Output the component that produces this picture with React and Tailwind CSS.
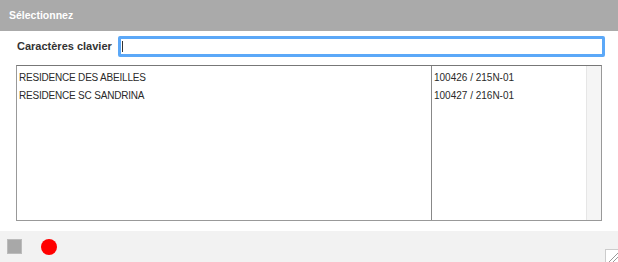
import React from 'react';

const rows = [
  { name: 'RESIDENCE DES ABEILLES', ref: '100426 / 215N-01' },
  { name: 'RESIDENCE SC SANDRINA', ref: '100427 / 216N-01' },
];

const App = () => {
  return (
    <div className="w-[618px] h-[262px] flex flex-col bg-white text-[#2a2a2a] font-['Liberation_Sans',Arial,sans-serif] overflow-hidden">
      <div className="h-[31px] flex-shrink-0 bg-[#aaaaaa] flex items-center pl-[9px]">
        <span className="text-white font-bold text-[10.5px]">Sélectionnez</span>
      </div>

      <div className="flex items-center pl-[17px] pr-[13px] mt-[5px] h-[21px]">
        <span className="font-bold text-[11px] text-[#333] w-[101px] flex-shrink-0 whitespace-nowrap">Caractères clavier</span>
        <div className="flex-1 h-[21px] border-[3px] border-[#5ba8f8] rounded-[2px] bg-white flex items-center pl-[1px]">
          <div className="w-px h-[11px] bg-[#333]" />
        </div>
      </div>

      <div className="mx-[16px] mt-[8px] h-[156px] border border-[#999] border-t-[#777] flex">
        <div className="w-[415px] border-r border-[#888] pt-[2px]">
          {rows.map((r) => (
            <div key={r.name} className="h-[18px] flex items-center pl-[2px] text-[10px] tracking-[-0.2px] whitespace-nowrap">{r.name}</div>
          ))}
        </div>
        <div className="flex-1 pt-[2px]">
          {rows.map((r) => (
            <div key={r.ref} className="h-[18px] flex items-center pl-[2px] text-[10px] whitespace-nowrap">{r.ref}</div>
          ))}
        </div>
        <div className="w-[15px] bg-[#f5f5f5] border-l border-[#e6e6e6]" />
      </div>

      <div className="mt-[10px] flex-1 bg-[#f2f2f2] flex items-center pl-[7px] gap-[19px] relative">
        <div className="w-[15px] h-[15px] bg-[#a8a8a8] border border-[#bbb]" />
        <div className="w-[16px] h-[16px] rounded-full bg-[#ff0000]" />
        <svg className="absolute right-0 bottom-0" width="13" height="13" viewBox="0 0 13 13">
          <rect x="0.5" y="0.5" width="14" height="14" fill="#fff" stroke="#ccc" />
          <line x1="4" y1="13" x2="13" y2="4" stroke="#999" strokeWidth="1" />
          <line x1="8" y1="13" x2="13" y2="8" stroke="#999" strokeWidth="1" />
        </svg>
      </div>
    </div>
  );
};

export default App;
